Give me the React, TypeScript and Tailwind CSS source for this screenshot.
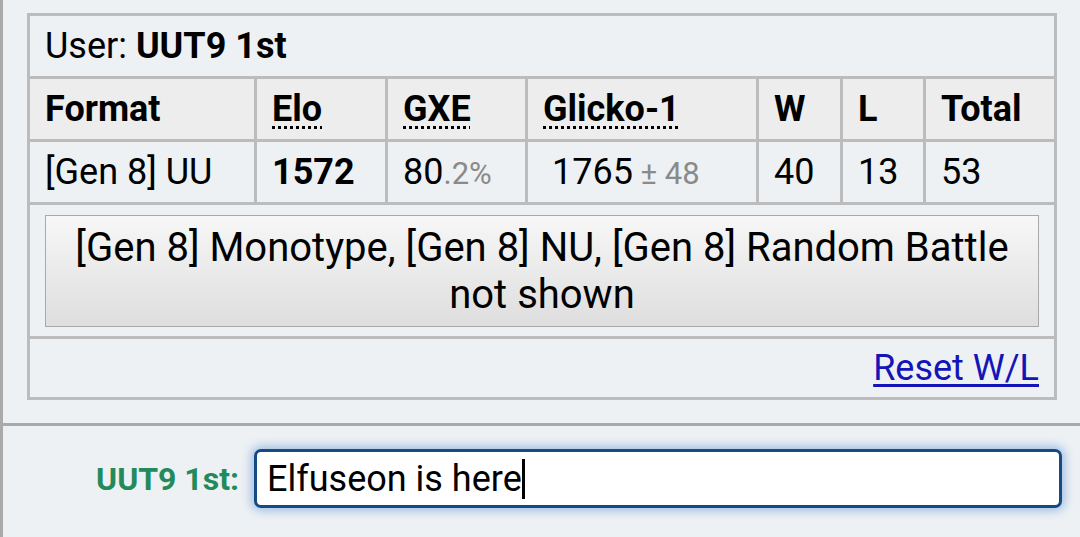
const th = 'border-[3px] border-[#bcbcbc] bg-[#ededed] px-[15px] text-left font-bold';
const td = 'border-[3px] border-[#bcbcbc] px-[15px]';
const abbr = 'underline decoration-dotted decoration-[3px] underline-offset-[5px]';

export default function App() {
  return (
    <div
      className="h-[537px] w-[1080px] overflow-hidden border-l-[3px] border-[#aaaaaa] bg-[#edf1f4] text-black"
      style={{ fontFamily: 'Roboto, "Liberation Sans", sans-serif' }}
    >
      {/* ladder table */}
      <div className="h-[423px] pt-[13px] pl-[24px]">
        <table className="w-[1030px] table-fixed border-collapse text-[36px] leading-none">
          <colgroup>
            <col className="w-[227px]" />
            <col className="w-[131px]" />
            <col className="w-[140px]" />
            <col className="w-[231px]" />
            <col className="w-[84px]" />
            <col className="w-[83px]" />
            <col />
          </colgroup>
          <tbody>
            <tr className="h-[63px]">
              <td colSpan={7} className={td}>
                User: <strong>UUT9 1st</strong>
              </td>
            </tr>
            <tr className="h-[63px]">
              <th className={th}>Format</th>
              <th className={th}>
                <span className={abbr}>Elo</span>
              </th>
              <th className={th}>
                <span className={abbr}>GXE</span>
              </th>
              <th className={th}>
                <span className={abbr}>Glicko-1</span>
              </th>
              <th className={th}>W</th>
              <th className={th}>L</th>
              <th className={th}>Total</th>
            </tr>
            <tr className="h-[63px]">
              <td className={td}>[Gen 8] UU</td>
              <td className={td + ' font-bold'}>1572</td>
              <td className={td}>
                80<span className="text-[31px] text-[#8a8a8a]">.2%</span>
              </td>
              <td className={td}>
                &nbsp;1765<span className="text-[31px] text-[#8a8a8a]"> ± 48</span>
              </td>
              <td className={td}>40</td>
              <td className={td}>13</td>
              <td className={td}>53</td>
            </tr>
            <tr className="h-[134px]">
              <td colSpan={7} className={td}>
                <button className="flex h-[112px] w-full flex-col items-center justify-center border border-[#a9a9a9] bg-gradient-to-b from-[#f7f7f7] to-[#dedede] text-[40px] leading-[47px]">
                  <span>[Gen 8] Monotype, [Gen 8] NU, [Gen 8] Random Battle</span>
                  <span>not shown</span>
                </button>
              </td>
            </tr>
            <tr className="h-[61px]">
              <td colSpan={7} className={td + ' text-right'}>
                <a href="#" className="text-[#1414b8] underline underline-offset-4">
                  Reset W/L
                </a>
              </td>
            </tr>
          </tbody>
        </table>
      </div>

      {/* chat box */}
      <div className="flex h-[114px] items-center border-t-[3px] border-[#aaaaaa] pr-[18px] pb-[6px]">
        <div className="w-[238px] pr-[2px] text-right text-[32px] font-bold text-[#238a5b]">UUT9 1st:</div>
        <div className="ml-[13px] flex h-[59px] flex-1 items-center rounded-[7px] border-[3px] border-[#164a82] bg-white pl-[10px] text-[36px] shadow-[0_0_10px_3px_rgba(70,130,210,0.45)]">
          <span>Elfuseon is here</span>
          <span className="h-[40px] w-[3px] bg-black" />
        </div>
      </div>
    </div>
  );
}
